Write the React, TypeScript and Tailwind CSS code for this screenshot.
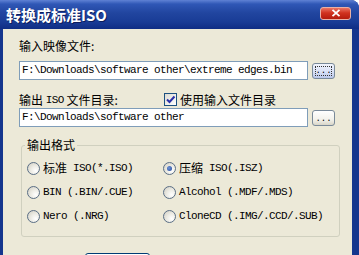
const mono = "font-['Liberation_Mono',monospace] text-[11px] tracking-[-0.6px] text-black";
const cjk = "font-['Noto_Sans_CJK_SC',sans-serif] text-[12px] text-black";

function BrowseButton({ focused }: { focused?: boolean }) {
  return (
    <div
      className={
        "flex h-[16px] w-[23px] items-end justify-center rounded-[3px] border border-[#7a8a99] pb-[2px] " +
        (focused
          ? "bg-[linear-gradient(180deg,#f2f5fd_0%,#d6def5_60%,#b9c6ea_100%)]"
          : "bg-[linear-gradient(180deg,#ffffff_0%,#f3f2ec_60%,#d8d5c8_100%)]")
      }
    >
      <div
        className={
          "flex h-[10px] w-[17px] items-end justify-center " +
          (focused ? "border border-dotted border-[#333]" : "")
        }
      >
        <span className="font-['Liberation_Mono',monospace] text-[9px] leading-[8px] tracking-[0px] text-black">...</span>
      </div>
    </div>
  );
}

function PathField({ value }: { value: string }) {
  return (
    <div className="flex h-[19px] w-[289px] items-center border border-[#7F9DB9] bg-white pl-[2px]">
      <span className={mono}>{value}</span>
    </div>
  );
}

function Radio({ checked }: { checked?: boolean }) {
  return (
    <div className="flex h-[13px] w-[13px] shrink-0 items-center justify-center rounded-full border border-[#5a6e85] bg-[radial-gradient(circle_at_70%_70%,#ffffff_0%,#ecebe4_45%,#cfccc0_100%)]">
      {checked && <div className="h-[5px] w-[5px] rounded-full bg-[radial-gradient(circle_at_40%_40%,#6d93d6,#23479a)]" />}
    </div>
  );
}

function Option({ checked, zh, latin }: { checked?: boolean; zh?: string; latin: string }) {
  return (
    <div className="flex h-[24px] items-center gap-[3px]">
      <Radio checked={checked} />
      <span className="flex items-center whitespace-pre">
        {zh && <span className={cjk + " leading-[14px]"}>{zh}</span>}
        <span className={mono + " leading-[14px]"}>{latin}</span>
      </span>
    </div>
  );
}

export default function App() {
  return (
    <div className="h-[255px] w-[359px] overflow-hidden bg-white">
      <div className="flex h-full flex-col rounded-tr-[8px] bg-[#15368e]">
        {/* title bar */}
        <div className="flex h-[29px] shrink-0 items-center justify-between rounded-tr-[8px] bg-[linear-gradient(180deg,#5f82d4_0%,#2f57b6_14%,#21459f_45%,#193c96_75%,#0f2d84_100%)] pl-[6px] pr-[8px]">
          <span className="font-['Noto_Sans_CJK_SC',sans-serif] text-[15px] font-bold leading-none text-white [text-shadow:1px_1px_0_#0b1d5c]">
            转换成标准ISO
          </span>
          <div className="mb-[3px] flex h-[13px] w-[31px] items-center justify-center rounded-[3px] border border-[#e9b0a4] bg-[linear-gradient(180deg,#ea7363_0%,#d0321f_45%,#b51b0d_100%)]">
            <svg width="10" height="8" viewBox="0 0 10 8">
              <path d="M1.5 0.8 L8.5 7.2 M8.5 0.8 L1.5 7.2" stroke="#fff" strokeWidth="1.8" />
            </svg>
          </div>
        </div>

        {/* client area */}
        <div className="ml-[3px] mr-[7px] flex-1 bg-[#ECE9D8] pl-[16px] pt-[10px]">
          <div className={cjk + " h-[14px] leading-[14px]"}>输入映像文件:</div>
          <div className="mt-[8px] flex items-center gap-[4px]">
            <PathField value="F:\Downloads\software other\extreme edges.bin" />
            <BrowseButton focused />
          </div>

          <div className="mt-[12px] flex h-[15px] items-center">
            <div className="flex w-[145px] items-center whitespace-pre">
              <span className={cjk + " leading-[14px]"}>输出 </span>
              <span className={mono + " leading-[14px]"}>ISO</span>
              <span className={cjk + " leading-[14px]"}> 文件目录:</span>
            </div>
            <div className="flex h-[13px] w-[13px] items-center justify-center border border-[#1C5180] bg-[linear-gradient(135deg,#dcdad2,#ffffff)]">
              <svg width="11" height="11" viewBox="0 0 11 11">
                <path d="M2 5.5 L4.5 8 L9.5 2.5" fill="none" stroke="#2a2fa8" strokeWidth="2" />
              </svg>
            </div>
            <span className={cjk + " ml-[3px] leading-[14px]"}>使用输入文件目录</span>
          </div>

          <div className="mt-[1px] flex items-center gap-[4px]">
            <PathField value="F:\Downloads\software other" />
            <BrowseButton />
          </div>

          {/* output format group */}
          <div className="relative ml-[2px] mt-[18px] h-[92px] w-[319px] rounded-[3px] border border-[#D0D0BF] pl-[5px] pt-[10px]">
            <span className={cjk + " absolute left-[3px] top-[-8px] bg-[#ECE9D8] px-[2px] leading-[14px]"}>输出格式</span>
            <div className="grid grid-cols-[136px_1fr]">
              <Option zh="标准" latin=" ISO(*.ISO)" />
              <Option checked zh="压缩" latin=" ISO(.ISZ)" />
              <Option latin="BIN (.BIN/.CUE)" />
              <Option latin="Alcohol (.MDF/.MDS)" />
              <Option latin="Nero (.NRG)" />
              <Option latin="CloneCD (.IMG/.CCD/.SUB)" />
            </div>
          </div>

          <div className="ml-[66px] mt-[16px] h-[23px] w-[65px] rounded-[3px] border border-[#003C74] bg-[linear-gradient(180deg,#ffffff,#ecebe6)]" />
        </div>
      </div>
    </div>
  );
}
